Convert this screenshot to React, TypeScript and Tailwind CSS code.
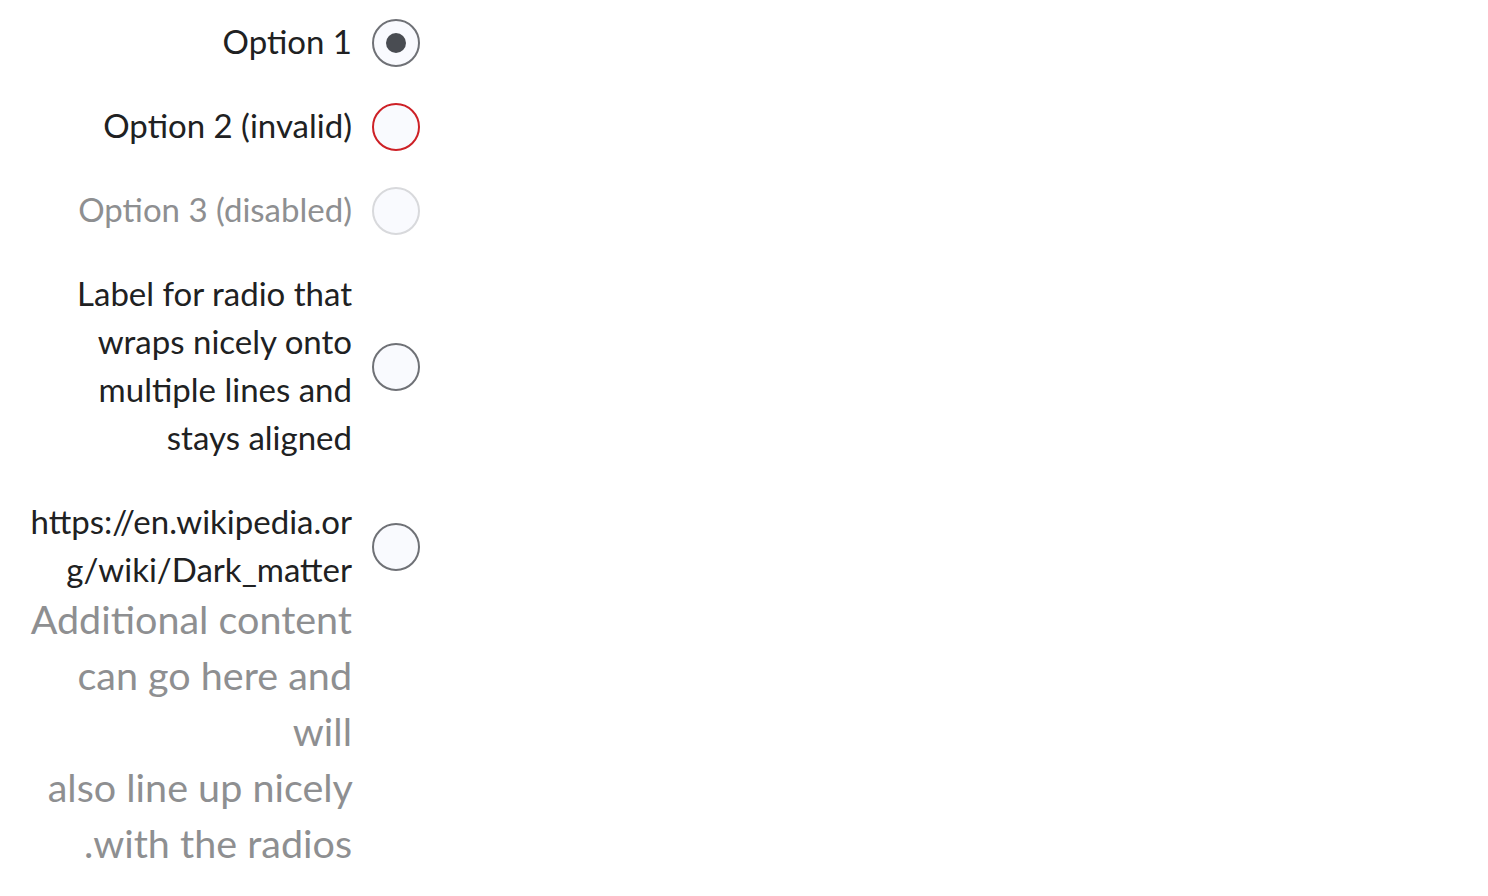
import React from 'react';

type RadioProps = {
  checked?: boolean;
  invalid?: boolean;
  disabled?: boolean;
};

const Radio: React.FC<RadioProps> = ({ checked, invalid, disabled }) => {
  // border colour follows state
  const border = disabled
    ? 'border-[#d8d9dc]'
    : invalid
    ? 'border-[#cd2026]'
    : 'border-[#6f7176]';
  return (
    <span
      className={`flex shrink-0 items-center justify-center w-12 h-12 rounded-full border-2 bg-[#f9fafe] ${border}`}
    >
      {checked && <span className="block w-5 h-5 rounded-full bg-[#494c52]" />}
    </span>
  );
};

const App: React.FC = () => {
  return (
    <div
      className="w-[420px] pl-6 pt-[19px] bg-white"
      style={{ fontFamily: 'Lato, "Open Sans", sans-serif' }}
    >
      <div dir="rtl" className="flex flex-col gap-9">
        <label className="flex items-center gap-5">
          <Radio checked />
          <span className="flex-1 -translate-y-0.5 text-[33px] leading-[48px] text-[#202122]">Option 1</span>
        </label>

        <label className="flex items-center gap-5">
          <Radio invalid />
          <span className="flex-1 -translate-y-0.5 text-[33px] leading-[48px] text-[#202122]">Option 2 (invalid)</span>
        </label>

        <label className="flex items-center gap-5">
          <Radio disabled />
          <span className="flex-1 -translate-y-0.5 text-[33px] leading-[48px] text-[#8e8f91]">Option 3 (disabled)</span>
        </label>

        <label className="flex items-center gap-5">
          <Radio />
          <span className="flex-1 -translate-y-0.5 text-[33px] leading-[48px] text-[#202122]">
            Label for radio that wraps nicely onto multiple lines and stays aligned
          </span>
        </label>

        <div className="flex flex-col">
          <label className="flex items-center gap-5">
            <Radio />
            <span className="flex-1 -translate-y-0.5 text-[33px] leading-[48px] text-[#202122] break-all">
              https://en.wikipedia.org/wiki/Dark_matter
            </span>
          </label>
          <div className="pr-[68px] -mt-1 text-[39.5px] leading-[56px] text-[#8e8f91]">
            Additional content can go here and will
            <br />
            also line up nicely with the radios.
          </div>
        </div>
      </div>
    </div>
  );
};

export default App;
